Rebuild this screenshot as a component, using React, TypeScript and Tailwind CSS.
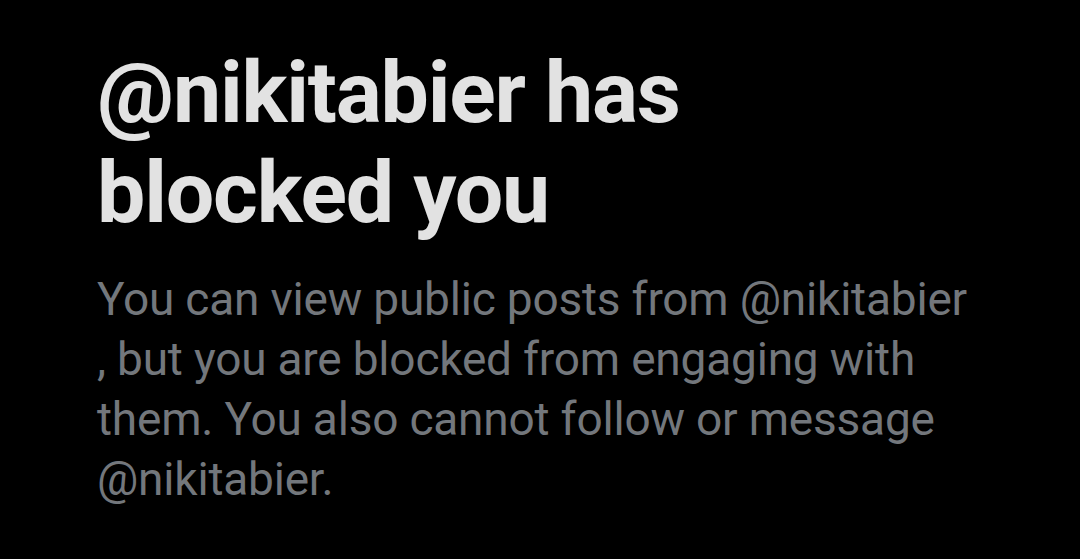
import React from "react";

export default function App() {
  return (
    <div className="w-[1080px] h-[559px] bg-black overflow-hidden pl-[97px] pt-[43px]" style={{ fontFamily: "Roboto, 'Noto Sans', sans-serif" }}>
      <h1 className="text-[#e2e2e2] font-bold text-[86px] leading-[100px] tracking-[-1.2px]">
        @nikitabier has
        <br />
        blocked you
      </h1>
      <p className="mt-[26px] text-[#73777c] text-[46px] leading-[60px] tracking-[-0.2px]">
        You can view public posts from @nikitabier
        <br />, but you are blocked from engaging with
        <br />
        them. You also cannot follow or message
        <br />
        @nikitabier.
      </p>
    </div>
  );
}
